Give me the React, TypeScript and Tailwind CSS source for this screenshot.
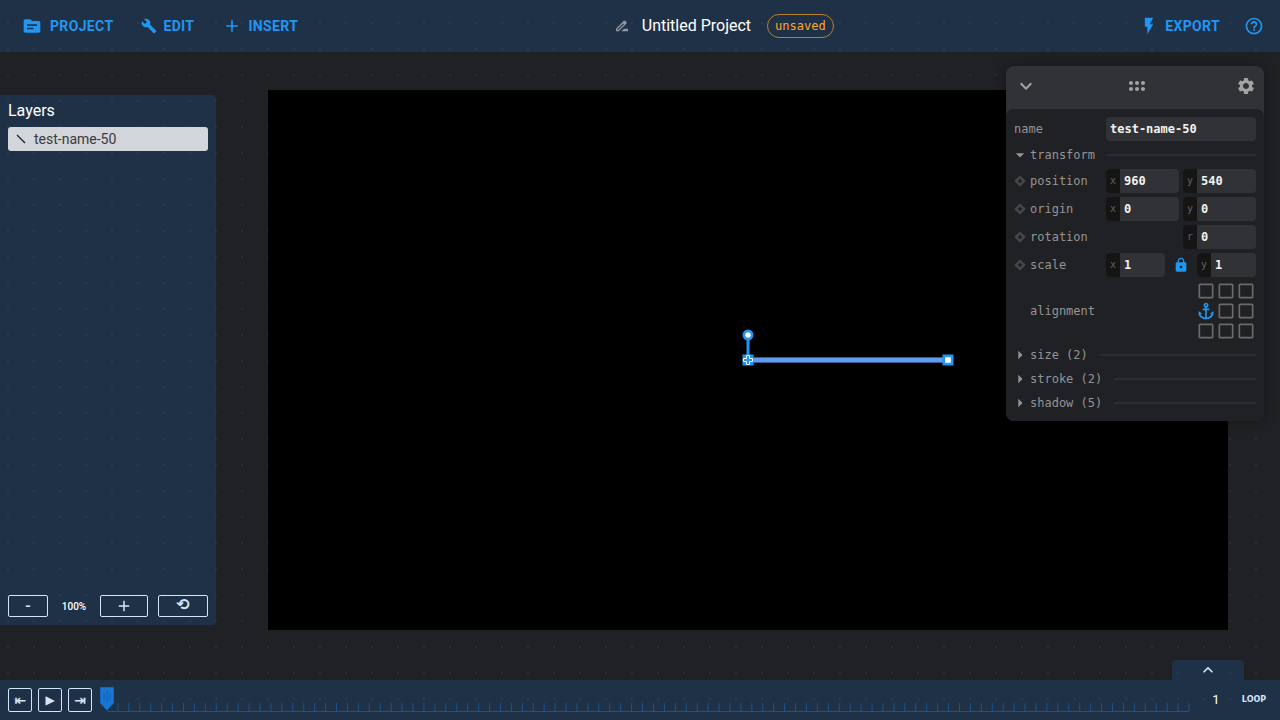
import React from "react";
import {
  MdAdd,
  MdAnchor,
  MdArrowDropDown,
  MdArrowRight,
  MdBuild,
  MdCheckBoxOutlineBlank,
  MdDragIndicator,
  MdDriveFileRenameOutline,
  MdExpandLess,
  MdExpandMore,
  MdFlashOn,
  MdHelpOutline,
  MdLock,
  MdSettings,
  MdTopic,
} from "react-icons/md";

const FRAMES = 100;

function Header() {
  const menuButton = "flex items-center text-sm font-bold tracking-wide text-[#2196f3]";
  return (
    <header className="flex h-[52px] shrink-0 items-center justify-between bg-[rgba(28,114,210,0.2)] pr-4 pl-[22px]">
      <nav className="flex items-center gap-7 pr-2.5">
        <button className={`${menuButton} gap-2`}>
          <MdTopic size={20} />
          PROJECT
        </button>
        <button className={`${menuButton} gap-1.5`}>
          <MdBuild size={16} />
          EDIT
        </button>
        <button className={`${menuButton} gap-1.5`}>
          <MdAdd size={20} />
          INSERT
        </button>
      </nav>
      <div className="flex items-center gap-4">
        <div className="flex items-center gap-3">
          <button aria-label="Rename project" className="text-[#8f98a3]">
            <MdDriveFileRenameOutline size={16} />
          </button>
          <h1 className="text-base text-white">Untitled Project</h1>
        </div>
        <span className="flex h-6 items-center rounded-full border border-[#b87f2a] px-[7px] font-['DejaVu_Sans_Mono',monospace] text-xs text-[#ffa726]">
          unsaved
        </span>
      </div>
      <div className="flex items-center justify-end gap-6">
        <button className={`${menuButton} gap-1.5`}>
          <MdFlashOn size={20} />
          EXPORT
        </button>
        <button aria-label="Help" className="text-[#2196f3]">
          <MdHelpOutline size={20} />
        </button>
      </div>
    </header>
  );
}

function Layers() {
  const zoomButton =
    "flex h-[22px] items-center justify-center rounded-[2px] border border-[#d3e5fa] text-[#d3e5fa]";
  return (
    <aside className="mt-[43px] mb-[55px] flex w-[216px] shrink-0 flex-col rounded-r bg-[rgba(28,114,210,0.2)] p-2">
      <h2 className="-mt-1 text-base text-white">Layers</h2>
      <ul className="mt-1 flex-1">
        <li>
          <button className="flex h-6 w-full items-center gap-2 rounded-[3px] bg-[#d2d5da] px-2 text-sm text-[#3a3b3e]">
            <svg viewBox="0 0 10 10" className="h-2.5 w-2.5" aria-hidden="true">
              <path d="M1 1 9 9" stroke="#202124" strokeWidth="1.3" />
            </svg>
            test-name-50
          </button>
        </li>
      </ul>
      <div className="flex items-center justify-between">
        <button aria-label="Zoom out" className={`${zoomButton} w-10 text-base font-medium`}>
          -
        </button>
        <span className="w-8 text-center text-[10px] font-medium text-white">100%</span>
        <button aria-label="Zoom in" className={`${zoomButton} w-12`}>
          <MdAdd size={18} />
        </button>
        <button
          aria-label="Reset zoom"
          className={`${zoomButton} w-[50px] pb-0.5 font-['DejaVu_Sans',sans-serif] text-base font-bold`}
        >
          ⟲
        </button>
      </div>
    </aside>
  );
}

function Stage() {
  return (
    <section aria-label="Stage" className="flex flex-1 px-[52px] pt-[38px] pb-[50px]">
      <div className="relative flex-1 bg-black">
        <svg
          viewBox="-10 -35 220 45"
          className="absolute top-1/2 left-1/2 -mt-[35px] -ml-[10px] h-[45px] w-[220px]"
          aria-label="Selected line"
        >
          <path d="M0 0H200" stroke="#3a5b91" strokeWidth="6" />
          <path d="M0 0H200" stroke="#5a9ff0" strokeWidth="4" />
          <path d="M0 -20V0" stroke="#2196f3" strokeWidth="3" />
          <circle cx="0" cy="-25" r="5.5" fill="#2196f3" />
          <circle cx="0" cy="-25" r="2.7" fill="#fff" />
          <rect x="-5.5" y="-5.5" width="11" height="11" fill="#2196f3" />
          <path
            d="M-1.5 -4.5H1.5V-1.5H4.5V1.5H1.5V4.5H-1.5V1.5H-4.5V-1.5H-1.5Z"
            fill="#2196f3"
            stroke="#fff"
          />
          <rect x="194.5" y="-5.5" width="11" height="11" fill="#2196f3" />
          <rect x="197.2" y="-2.8" width="5.6" height="5.6" fill="#fff" />
        </svg>
      </div>
    </section>
  );
}

function Field({ prefix, value, label }: { prefix: string; value: string; label: string }) {
  return (
    <label className="flex h-6 min-w-0 flex-1 overflow-hidden rounded bg-[#313235]">
      <span className="flex w-3.5 shrink-0 items-center justify-center bg-[#151515] text-[10px] text-[#626262]">
        {prefix}
      </span>
      <input
        aria-label={label}
        defaultValue={value}
        className="w-full min-w-0 bg-transparent px-1 text-xs font-bold text-[#f2f2f2] outline-none"
      />
    </label>
  );
}

function Keyframe() {
  return (
    <svg viewBox="0 0 12 12" className="h-3 w-3" aria-hidden="true">
      <path
        d="M6 1.6 10.4 6 6 10.4 1.6 6Z"
        fill="#464648"
        stroke="#464648"
        strokeWidth="2"
        strokeLinejoin="round"
      />
      <path d="M6 4V8M4 6H8" stroke="#202124" strokeWidth="1.6" />
    </svg>
  );
}

function Row({ label, children }: { label: string; children: React.ReactNode }) {
  return (
    <div className="flex h-6 items-center">
      <div className="flex w-[92px] shrink-0 items-center gap-1">
        <Keyframe />
        <span>{label}</span>
      </div>
      <div className="flex min-w-0 flex-1 items-center gap-1">{children}</div>
    </div>
  );
}

function GroupTitle({ label, open }: { label: string; open?: boolean }) {
  return (
    <button aria-expanded={!!open} className="flex h-6 w-full items-center">
      <span className="flex w-4 justify-center pr-1">
        {open ? (
          <MdArrowDropDown size={20} className="shrink-0" />
        ) : (
          <MdArrowRight size={20} className="shrink-0" />
        )}
      </span>
      {label}
      <span className="ml-3 h-0.5 flex-1 bg-[#2c2d30]" />
    </button>
  );
}

function Properties() {
  return (
    <section
      aria-label="Properties"
      className="absolute top-3.5 right-4 z-10 w-[258px] rounded-lg bg-[#313235] font-['DejaVu_Sans_Mono',monospace] text-xs text-[#949494] shadow-[0_0_12px_rgba(0,0,0,0.35)]"
    >
      <div className="flex h-[43px] items-center justify-between px-2 pb-[3px] text-[#a3a3a4]">
        <button aria-label="Collapse">
          <MdExpandMore size={24} />
        </button>
        <MdDragIndicator size={24} className="rotate-90" />
        <button aria-label="Settings">
          <MdSettings size={20} />
        </button>
      </div>
      <div className="rounded-lg bg-[#202124] px-2 pt-2 pb-1.5">
        <label className="flex h-6 items-center">
          <span className="w-[92px] shrink-0">name</span>
          <input
            defaultValue="test-name-50"
            className="h-6 min-w-0 flex-1 rounded bg-[#313235] px-1 font-bold text-[#f2f2f2] outline-none"
          />
        </label>
        <div className="my-0.5">
          <GroupTitle label="transform" open />
          <div className="mt-0.5 flex flex-col gap-1">
            <Row label="position">
              <Field prefix="x" value="960" label="Position x" />
              <Field prefix="y" value="540" label="Position y" />
            </Row>
            <Row label="origin">
              <Field prefix="x" value="0" label="Origin x" />
              <Field prefix="y" value="0" label="Origin y" />
            </Row>
            <Row label="rotation">
              <span className="flex-1" />
              <Field prefix="r" value="0" label="Rotation" />
            </Row>
            <Row label="scale">
              <Field prefix="x" value="1" label="Scale x" />
              <button aria-label="Lock scale ratio" className="flex w-6 justify-center text-[#2196f3]">
                <MdLock size={16} />
              </button>
              <Field prefix="y" value="1" label="Scale y" />
            </Row>
            <div className="flex items-center justify-between pl-4">
              <span>alignment</span>
              <div className="grid grid-cols-3">
                {Array.from({ length: 9 }, (_, i) => (
                  <button
                    key={i}
                    aria-label={`Align ${i + 1}`}
                    className="flex h-5 w-5 items-center justify-center text-[#6b6b6c]"
                  >
                    {i === 3 ? (
                      <MdAnchor size={20} className="text-[#2196f3]" />
                    ) : (
                      <MdCheckBoxOutlineBlank size={20} />
                    )}
                  </button>
                ))}
              </div>
            </div>
          </div>
        </div>
        <GroupTitle label="size (2)" />
        <GroupTitle label="stroke (2)" />
        <GroupTitle label="shadow (5)" />
      </div>
    </section>
  );
}

function Timeline() {
  const control =
    "flex h-6 w-6 items-center justify-center rounded-[2px] border border-[#d3e5fa] font-['DejaVu_Sans',sans-serif] text-[#d3e5fa]";
  return (
    <footer className="flex h-10 shrink-0 items-center bg-[rgba(28,114,210,0.2)] px-2">
      <div className="flex gap-1.5">
        <button aria-label="First frame" className={`${control} text-sm font-bold`}>
          ⇤
        </button>
        <button aria-label="Play" className={`${control} text-xs`}>
          ▶
        </button>
        <button aria-label="Last frame" className={`${control} text-sm font-bold`}>
          ⇥
        </button>
      </div>
      <div className="relative ml-[15px] h-6 flex-1">
        <svg className="h-full w-full overflow-visible" aria-hidden="true">
          {Array.from({ length: FRAMES - 1 }, (_, i) => {
            const x = `${((i + 1) * 100) / (FRAMES - 1)}%`;
            return <line key={i} x1={x} x2={x} y1="15" y2="23" stroke="#1b5390" />;
          })}
          <line x1="0" x2="100%" y1="23.5" y2="23.5" stroke="#1b5390" />
        </svg>
        <svg
          viewBox="0 0 14 24"
          className="absolute -top-px -left-[7px] h-6 w-3.5"
          aria-label="Playhead"
        >
          <path d="M.5 .5H13.5V16L7 23.2.5 16Z" fill="#1976d2" stroke="#1565c0" />
          <path d="M4 6V13M7 4V15M10 6V13" stroke="#1565c0" strokeWidth="1.5" />
        </svg>
      </div>
      <output className="ml-4 w-[22px] text-center text-[13px] text-white">1</output>
      <button className="ml-[15px] flex w-6 justify-center font-['DejaVu_Sans',sans-serif] text-[8px] font-bold text-[#d3e5fa]">
        LOOP
      </button>
      <span className="w-1.5" />
    </footer>
  );
}

export default function App() {
  return (
    <div className="flex h-screen flex-col overflow-hidden bg-[#202124] bg-[conic-gradient(from_270deg_at_2px_2px,#2c2d31_90deg,transparent_0)] bg-[length:26px_26px] bg-[position:7px_22px] font-[Roboto,sans-serif]">
      <Header />
      <main className="relative flex min-h-0 flex-1">
        <Layers />
        <Stage />
        <Properties />
        <button
          aria-label="Expand timeline"
          className="absolute right-9 bottom-0 flex h-5 w-[72px] items-center justify-center rounded-t bg-[rgba(28,114,210,0.2)] text-[#d3e5fa]"
        >
          <MdExpandLess size={20} />
        </button>
      </main>
      <Timeline />
    </div>
  );
}
